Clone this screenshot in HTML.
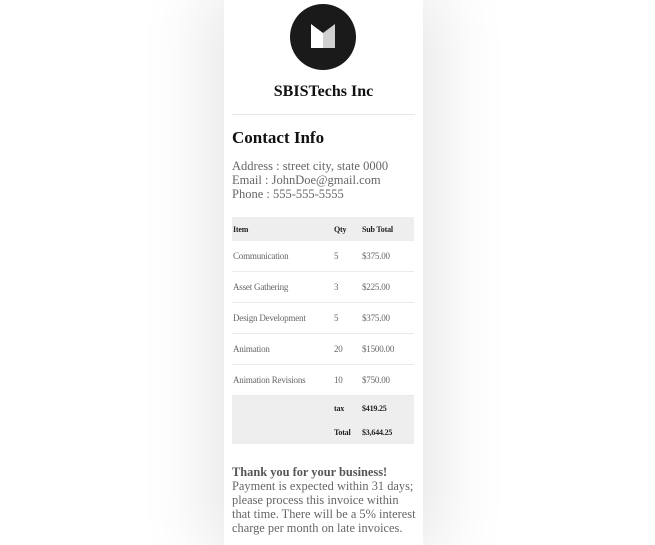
<!DOCTYPE html>
<html><head><style>
html,body{margin:0;padding:0;background:#fff;width:655px;height:545px;overflow:hidden}
.card{position:absolute;left:224px;top:0;width:199px;height:545px;background:#fff;box-shadow:0 0 70px 12px rgba(0,0,0,0.11);font-family:"Liberation Serif",serif}
.logo{position:absolute;left:66px;top:4px;width:66px;height:66px;border-radius:50%;background:#1a1a1a}
h1{position:absolute;left:0;width:199px;top:83px;margin:0;text-align:center;font-size:16px;font-weight:bold;color:#111}
.hr{position:absolute;left:8px;width:183px;top:114px;border-top:1px solid #e6e6e6}
h2{position:absolute;left:8px;top:128px;margin:0;font-size:17px;font-weight:bold;color:#111}
.addr{position:absolute;left:8px;top:159px;font-size:12.5px;line-height:14px;color:#666}
table{position:absolute;left:8px;top:217px;width:182px;border-collapse:collapse;font-size:9px;color:#666;letter-spacing:-0.2px}
td{padding:0 0 0 1px}
tr.h td{background:#eee;height:24px;font-weight:bold;color:#222;font-size:8px}
tr.r td{height:30px;border-bottom:1px solid #eaeaea}
tr.r:last-child td{border-bottom:none}
tr.s td{background:#eee;height:24px;font-weight:bold;color:#222;font-size:8px}
.foot{position:absolute;left:8px;top:465px;width:184px;font-size:12.4px;line-height:14px;color:#666}
</style></head><body>
<div class="card">
<div class="logo"><svg width="66" height="66" viewBox="0 0 66 66"><polygon points="21,20 33,29 33,44 21,44" fill="#fff"/><polygon points="33,29 45,20 45,44 33,44" fill="#d0d0d0"/></svg></div>
<h1>SBISTechs Inc</h1>
<div class="hr"></div>
<h2>Contact Info</h2>
<div class="addr">Address : street city, state 0000<br>Email : JohnDoe@gmail.com<br>Phone : 555-555-5555</div>
<table>
<tr class="h"><td style="width:100px">Item</td><td style="width:27px">Qty</td><td>Sub Total</td></tr>
<tr class="r"><td>Communication</td><td>5</td><td>$375.00</td></tr>
<tr class="r"><td>Asset Gathering</td><td>3</td><td>$225.00</td></tr>
<tr class="r"><td>Design Development</td><td>5</td><td>$375.00</td></tr>
<tr class="r"><td>Animation</td><td>20</td><td>$1500.00</td></tr>
<tr class="r"><td>Animation Revisions</td><td>10</td><td>$750.00</td></tr>
<tr class="s"><td></td><td>tax</td><td>$419.25</td></tr>
<tr class="s"><td></td><td>Total</td><td>$3,644.25</td></tr>
</table>
<div class="foot"><b style="color:#555">Thank you for your business!</b><br>Payment is expected within 31 days; please process this invoice within that time. There will be a 5% interest charge per month on late invoices.</div>
</div>
</body></html>
